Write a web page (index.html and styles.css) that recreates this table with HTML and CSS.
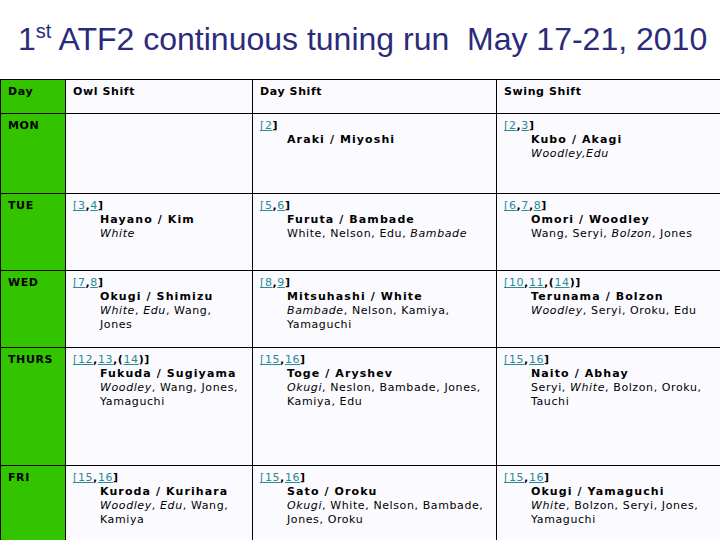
FILE: index.html
```html
<!DOCTYPE html>
<html>
<head>
<meta charset="utf-8">
<link rel="stylesheet" href="styles.css">
</head>
<body>
<div class="page">
  <h1 class="title"><span>1<sup>st</sup> ATF2 continuous tuning run&nbsp; May 17-21, 2010</span></h1>
  <table class="grid">
    <colgroup>
      <col class="c-day"><col class="c-owl"><col class="c-dayshift"><col class="c-swing">
    </colgroup>
    <tr class="r-head">
      <td class="day">Day</td>
      <td class="head">Owl Shift</td>
      <td class="head">Day Shift</td>
      <td class="head">Swing Shift</td>
    </tr>
    <tr class="r-mon">
      <td class="day">MON</td>
      <td></td>
      <td><div class="refs"><a>[2</a>]</div><div class="lead">Araki / Miyoshi</div></td>
      <td><div class="refs"><a>[2</a>,<a>3</a>]</div><div class="lead">Kubo / Akagi</div><div class="crew"><i>Woodley,Edu</i></div></td>
    </tr>
    <tr class="r-tue">
      <td class="day">TUE</td>
      <td><div class="refs"><a>[3</a>,<a>4</a>]</div><div class="lead">Hayano / Kim</div><div class="crew"><i>White</i></div></td>
      <td><div class="refs"><a>[5</a>,<a>6</a>]</div><div class="lead">Furuta / Bambade</div><div class="crew">White, Nelson, Edu, <i>Bambade</i></div></td>
      <td><div class="refs"><a>[6</a>,<a>7</a>,<a>8</a>]</div><div class="lead">Omori / Woodley</div><div class="crew">Wang, Seryi, <i>Bolzon</i>, Jones</div></td>
    </tr>
    <tr class="r-wed">
      <td class="day">WED</td>
      <td><div class="refs"><a>[7</a>,<a>8</a>]</div><div class="lead">Okugi / Shimizu</div><div class="crew"><i>White</i>, <i>Edu</i>, Wang, Jones</div></td>
      <td><div class="refs"><a>[8</a>,<a>9</a>]</div><div class="lead">Mitsuhashi / White</div><div class="crew"><i>Bambade</i>, Nelson, Kamiya, Yamaguchi</div></td>
      <td><div class="refs"><a>[10</a>,<a>11</a>,(<a>14</a>)]</div><div class="lead">Terunama / Bolzon</div><div class="crew"><i>Woodley</i>, Seryi, Oroku, Edu</div></td>
    </tr>
    <tr class="r-thu">
      <td class="day">THURS</td>
      <td><div class="refs"><a>[12</a>,<a>13</a>,(<a>14</a>)]</div><div class="lead">Fukuda / Sugiyama</div><div class="crew"><i>Woodley</i>, Wang, Jones, Yamaguchi</div></td>
      <td><div class="refs"><a>[15</a>,<a>16</a>]</div><div class="lead">Toge / Aryshev</div><div class="crew"><i>Okugi</i>, Neslon, Bambade, Jones, Kamiya, Edu</div></td>
      <td><div class="refs"><a>[15</a>,<a>16</a>]</div><div class="lead">Naito / Abhay</div><div class="crew">Seryi, <i>White</i>, Bolzon, Oroku, Tauchi</div></td>
    </tr>
    <tr class="r-fri">
      <td class="day">FRI</td>
      <td><div class="refs"><a>[15</a>,<a>16</a>]</div><div class="lead">Kuroda / Kurihara</div><div class="crew"><i>Woodley</i>, <i>Edu</i>, Wang, Kamiya</div></td>
      <td><div class="refs"><a>[15</a>,<a>16</a>]</div><div class="lead">Sato / Oroku</div><div class="crew"><i>Okugi</i>, White, Nelson, Bambade, Jones, Oroku</div></td>
      <td><div class="refs"><a>[15</a>,<a>16</a>]</div><div class="lead">Okugi / Yamaguchi</div><div class="crew"><i>White</i>, Bolzon, Seryi, Jones, Yamaguchi</div></td>
    </tr>
  </table>
</div>
</body>
</html>
```
FILE: styles.css
```css
html, body {
  margin: 0;
  padding: 0;
  background: #ffffff;
}
.page {
  width: 720px;
  height: 540px;
  overflow: hidden;
}
.title {
  margin: 0;
  height: 79px;
  padding: 19px 0 0 18px;
  box-sizing: border-box;
  font-family: "Liberation Sans", Arial, sans-serif;
  font-weight: normal;
  font-size: 32px;
  line-height: 40px;
  color: #2b2b7c;
  white-space: nowrap;
}
.title sup {
  font-size: 20px;
  vertical-align: 0;
  position: relative;
  top: -12px;
}
.grid {
  border-collapse: collapse;
  table-layout: fixed;
  width: 730px;
  font-family: "DejaVu Sans", Verdana, sans-serif;
  font-size: 11px;
  line-height: 14px;
  color: #000;
  letter-spacing: 0.6px;
}
.c-day { width: 65px; }
.c-owl { width: 187px; }
.c-dayshift { width: 244px; }
.c-swing { width: 234px; }
.grid td {
  border: 1px solid #000;
  vertical-align: top;
  padding: 5px 8px 0 7px;
  background: #fbfbff;
}
.grid td.day {
  background: #33c400;
  font-weight: bold;
}
.grid td.head {
  font-weight: bold;
}
.r-head { height: 34px; }
.r-mon { height: 80px; }
.r-tue { height: 77px; }
.r-wed { height: 77px; }
.r-thu { height: 118px; }
.r-fri { height: 90px; }
.refs {
  font-weight: bold;
}
.refs a {
  font-weight: normal;
  color: #2a8a96;
  text-decoration: underline;
}
.lead {
  padding-left: 27px;
  font-weight: bold;
  letter-spacing: 1.1px;
}
.crew {
  padding-left: 27px;
}
```
